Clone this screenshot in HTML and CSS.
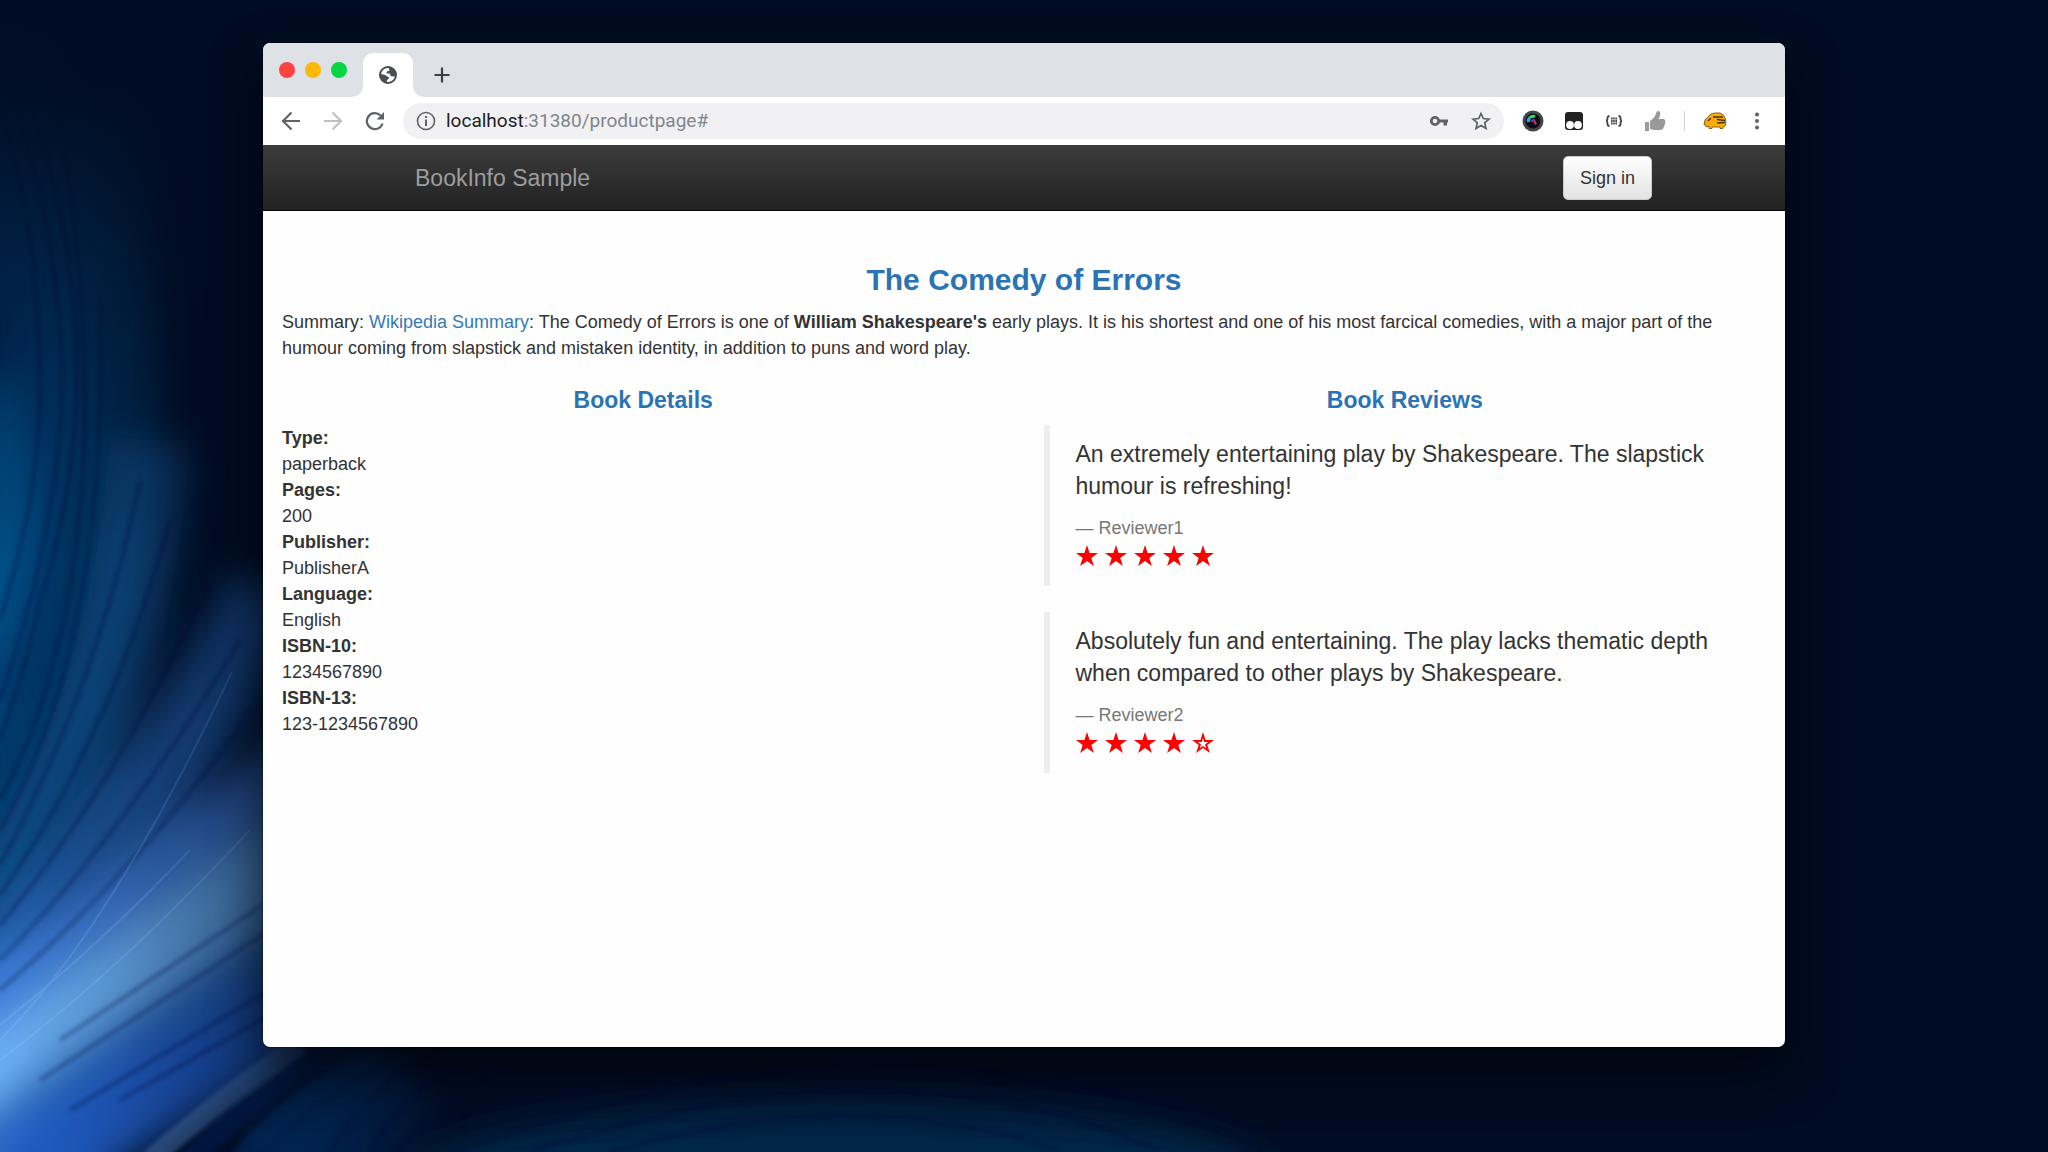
FILE: index.html
```html
<!DOCTYPE html>
<html lang="en">
<head>
<meta charset="utf-8">
<title>Simple Bookstore App</title>
<link rel="stylesheet" href="styles.css">
</head>

<body>
	<!-- desktop wallpaper -->
	<svg class="wallpaper" viewBox="0 0 2048 1152" preserveAspectRatio="none" aria-hidden="true">
		<defs>
			<linearGradient id="fade" gradientUnits="userSpaceOnUse" x1="0" y1="0" x2="480" y2="0">
				<stop offset="0" stop-color="#fff"/>
				<stop offset="0.25" stop-color="#ccc"/>
				<stop offset="0.6" stop-color="#666"/>
				<stop offset="1" stop-color="#000"/>
			</linearGradient>
			<mask id="edge" maskUnits="userSpaceOnUse" x="-60" y="-60" width="700" height="1300">
				<rect x="-60" y="-60" width="700" height="1300" fill="url(#fade)"/>
			</mask>
			<linearGradient id="night" x1="0" y1="0" x2="0" y2="1">
				<stop offset="0" stop-color="#000c22"/>
				<stop offset="0.15" stop-color="#000c22" stop-opacity="0.95"/>
				<stop offset="0.5" stop-color="#000c22" stop-opacity="0.5"/>
				<stop offset="1" stop-color="#000c22" stop-opacity="0"/>
			</linearGradient>
			<linearGradient id="ridge" x1="0" y1="0" x2="0" y2="1">
				<stop offset="0" stop-color="#03203f"/>
				<stop offset="1" stop-color="#04375c"/>
			</linearGradient>
			<filter id="soft" filterUnits="userSpaceOnUse" x="-100" y="-100" width="2200" height="1400">
				<feGaussianBlur stdDeviation="18"/>
			</filter>
			<filter id="fine" filterUnits="userSpaceOnUse" x="-20" y="-20" width="1600" height="1200">
				<feGaussianBlur stdDeviation="2"/>
			</filter>
		</defs>
		<rect width="2048" height="1152" fill="#000c22"/>
		<g mask="url(#edge)">
			<g fill="none" filter="url(#soft)">
				<path d="M-70 0Q100 330 -20 640" stroke="#02498a" stroke-width="90" opacity="0.7"/>
				<path d="M-20 380Q30 520 -30 740" stroke="#05629c" stroke-width="60" opacity="0.6"/>
				<path d="M20 0Q140 440 -40 800" stroke="#03467e" stroke-width="60" opacity="0.6"/>
				<path d="M90 100Q190 600 -40 880" stroke="#075492" stroke-width="80" opacity="0.5"/>
				<path d="M150 440Q130 760 -40 940" stroke="#1262a8" stroke-width="80" opacity="0.6"/>
				<path d="M270 590Q150 840 -40 1000" stroke="#2872cc" stroke-width="80" opacity="0.7"/>
				<path d="M400 690Q200 860 -40 1040" stroke="#4484e4" stroke-width="80" opacity="0.9"/>
				<path d="M420 780Q200 910 -40 1110" stroke="#6cb2f6" stroke-width="80"/>
				<path d="M420 880Q220 980 -40 1170" stroke="#2e70c4" stroke-width="70"/>
				<path d="M440 940Q220 1030 20 1180" stroke="#2260cc" stroke-width="90"/>
				<path d="M420 1080L280 1190" stroke="#0350a0" stroke-width="110"/>
			</g>
			<g fill="none" filter="url(#fine)">
				<path d="M300 1045Q230 1090 150 1160" stroke="#7ab8ff" stroke-width="20" opacity="0.4"/>
				<path d="M330 1045Q260 1095 190 1160" stroke="#00286e" stroke-width="20" opacity="0.6"/>
				<path d="M380 1050Q290 1100 240 1160" stroke="#0a58b8" stroke-width="20" opacity="0.4"/>
			</g>
		</g>
		<ellipse cx="840" cy="1190" rx="440" ry="90" fill="url(#ridge)" filter="url(#soft)"/>
		<g fill="none" stroke="#000c38" stroke-width="3" opacity="0.4" filter="url(#fine)">
			<path d="M0 110Q40 220 40 400Q38 500 0 620"/>
			<path d="M0 60Q65 240 62 400Q55 540 0 700"/>
			<path d="M0 30Q130 320 40 600Q25 670 0 740"/>
			<path d="M60 120Q130 560 0 800"/>
			<path d="M100 300Q110 640 0 830"/>
			<path d="M140 480Q100 680 0 865"/>
			<path d="M170 520Q110 740 0 895"/>
			<path d="M210 580Q120 780 0 925"/>
			<path d="M240 640Q120 840 0 960"/>
			<path d="M260 700Q130 880 0 990"/>
			<path d="M450 1152Q700 1070 860 1062Q1120 1070 1260 1152"/>
			<path d="M530 1152Q720 1090 860 1090Q1050 1095 1160 1152"/>
			<path d="M610 1152Q740 1115 860 1116Q980 1120 1060 1152"/>
			<path d="M270 900L60 1040M270 930L40 1080M270 990L70 1110M270 1015L120 1100"/>
			<path d="M420 1060Q360 1100 330 1152M460 1060Q400 1100 370 1152M510 1060Q440 1100 400 1152"/>
		</g>
		<g fill="none" stroke="#9cc8ff" stroke-width="2" opacity="0.2" mask="url(#edge)">
			<path d="M0 1040Q110 930 232 672"/>
			<path d="M0 1025Q100 945 190 850"/>
			<path d="M0 1060Q120 970 250 830"/>
		</g>
		<rect width="600" height="560" fill="url(#night)"/>
	</svg>

	<main class="desktop">
	<div class="window">
		<!-- tab strip -->
		<div class="tabs">
			<div class="lights"><i class="close"></i><i class="minimize"></i><i class="zoom"></i></div>
			<div class="tab">
				<svg width="20" height="20" viewBox="0 0 20 20"><circle cx="10" cy="10" r="8" fill="#fff" stroke="#4a4d51" stroke-width="2"/><path d="M9 1.500Q14 1 17 5L18.500 9Q18 12 15 11.500L12.500 11L12 8.500H8.500L9 6.500L11.500 5.500L11 3.500ZM1.500 9L6 9.500L9.500 11.500L11.500 13L9 15L8.500 18Q2.500 16 1.500 11Z" fill="#4a4d51"/></svg>
			</div>
			<button class="newtab" aria-label="New tab">
				<svg width="18" height="18" viewBox="0 0 18 18" fill="none" stroke="#3c4043" stroke-width="2.200"><path d="M9 1.500V16.500M1.500 9H16.500"/></svg>
			</button>
		</div>

		<!-- toolbar -->
		<div class="toolbar">
			<button aria-label="Back"><svg width="20" height="20" viewBox="0 0 20 20" fill="none" stroke="#5f6368" stroke-width="2.200"><path d="M19 10H2M10.500 1.500L2 10L10.500 18.500"/></svg></button>
			<button aria-label="Forward"><svg width="20" height="20" viewBox="0 0 20 20" fill="none" stroke="#bdc1c6" stroke-width="2.200"><path d="M1 10H18M9.500 1.500L18 10L9.500 18.500"/></svg></button>
			<button aria-label="Reload"><svg width="20" height="20" viewBox="0 0 20 20"><path d="M17.500 12.500A8 8 0 1 1 15.500 4.500" fill="none" stroke="#5f6368" stroke-width="2.200"/><path d="M19 1V8.500H11.500Z" fill="#5f6368"/></svg></button>
			<div class="address">
				<svg width="20" height="20" viewBox="0 0 20 20"><circle cx="10" cy="10" r="8.500" fill="none" stroke="#5f6368" stroke-width="1.600"/><path d="M9 5H11V7H9ZM9 8.500H11V15H9Z" fill="#5f6368"/></svg>
				<span class="url"><b>localhost</b>:31380/productpage#</span>
				<button aria-label="Passwords"><svg width="20" height="20" viewBox="0 0 20 20"><circle cx="6" cy="10" r="3.700" fill="none" stroke="#5f6368" stroke-width="2.800"/><path d="M9 8.500H19V11.500H18V14.500H14.500V11.500H9Z" fill="#5f6368"/></svg></button>
				<button aria-label="Bookmark"><svg width="20" height="20" viewBox="0 0 20 20"><path d="M10 2.500L12.300 7.500L18 8.100L13.700 11.900L15 17.500L10 14.600L5 17.500L6.300 11.900L2 8.100L7.700 7.500Z" fill="none" stroke="#5f6368" stroke-width="1.700"/></svg></button>
			</div>
			<div class="extensions">
				<button aria-label="Camera extension"><svg width="22" height="22" viewBox="0 0 22 22" fill="none" stroke-width="3"><circle cx="11" cy="11" r="10.500" fill="#42474a"/><circle cx="11" cy="11" r="7.500" fill="#0c0c14"/><path d="M6.500 12A4.500 4.500 0 0 1 8 7.500" stroke="#20b0e8"/><path d="M8 7.500A5 5 0 0 1 13 6.500" stroke="#30e050"/><path d="M9.500 12Q10 10 12.500 10" stroke="#3050e0" stroke-width="2"/><path d="M12 10L14 14.500" stroke="#e02080" stroke-width="2"/></svg></button>
				<button aria-label="Script extension"><svg width="20" height="20" viewBox="0 0 20 20"><rect x="1" y="1" width="18" height="18" rx="3" fill="#222"/><circle cx="6" cy="14" r="3.900" fill="#fff"/><circle cx="14" cy="14" r="3.900" fill="#fff"/></svg></button>
				<button aria-label="JSON extension"><svg width="20" height="20" viewBox="0 0 20 20" fill="none" stroke="#444" stroke-width="1.800"><path d="M5.500 5Q3.500 5 3.500 7Q3.500 10 2 10Q3.500 10 3.500 13Q3.500 15 5.500 15M14.500 5Q16.500 5 16.500 7Q16.500 10 18 10Q16.500 10 16.500 13Q16.500 15 14.500 15"/><path d="M7 7.500H13M7 10H13M7 12.500H13" stroke-dasharray="1.600 0.600"/></svg></button>
				<button aria-label="Like"><svg width="22" height="22" viewBox="0 0 22 22" fill="#9a9a9a"><path d="M1 12H5V21H1ZM6 11Q11 8 12.500 2Q14 0 16 2Q17 5 14.500 9H20Q22 10 21 14L19.500 18Q19 20 16 20H10L6 19Z"/></svg></button>
				<span class="divider"></span>
				<button aria-label="Profile"><svg width="24" height="20" viewBox="0 0 24 20"><path d="M1 14Q1 8 5 6Q7 2 12 2H17Q21 3 22.500 8Q23.500 13 22 15L20 16V17.500H17V16H9V17.500H6V15.500L3 15.500L2.500 13.500Z" fill="#fbab0c" stroke="#8d641a"/><path d="M10 6H20M14 8.500L22 9.500M14 12L22 11.500M5 10L8 7" stroke="#49330d" stroke-width="1.300"/></svg></button>
				<button aria-label="Menu"><svg width="20" height="20" viewBox="0 0 20 20" fill="#5f6368"><circle cx="10" cy="3.500" r="2"/><circle cx="10" cy="10" r="2"/><circle cx="10" cy="16.500" r="2"/></svg></button>
			</div>
		</div>

		<!-- product page -->
		<nav class="navbar">
			<a class="brand" href="#">BookInfo Sample</a>
			<button class="signin">Sign in</button>
		</nav>

		<div class="page">
			<h3>The Comedy of Errors</h3>
			<p>Summary: <a href="#">Wikipedia Summary</a>: The Comedy of Errors is one of <b>William Shakespeare's</b> early plays. It is his shortest and one of his most farcical comedies, with a major part of the humour coming from slapstick and mistaken identity, in addition to puns and word play.</p>

			<div class="row">
				<div class="col">
					<h4>Book Details</h4>
					<dl>
						<dt>Type:</dt><dd>paperback</dd>
						<dt>Pages:</dt><dd>200</dd>
						<dt>Publisher:</dt><dd>PublisherA</dd>
						<dt>Language:</dt><dd>English</dd>
						<dt>ISBN-10:</dt><dd>1234567890</dd>
						<dt>ISBN-13:</dt><dd>123-1234567890</dd>
					</dl>
				</div>
				<div class="col">
					<h4>Book Reviews</h4>
					<blockquote>
						<p>An extremely entertaining play by Shakespeare. The slapstick humour is refreshing!</p>
						<small>Reviewer1</small>
						<div class="stars" role="img" aria-label="5 of 5">
							<svg viewBox="0 0 22 22"><use href="#star"/></svg>
							<svg viewBox="0 0 22 22"><use href="#star"/></svg>
							<svg viewBox="0 0 22 22"><use href="#star"/></svg>
							<svg viewBox="0 0 22 22"><use href="#star"/></svg>
							<svg viewBox="0 0 22 22"><use href="#star"/></svg>
						</div>
					</blockquote>
					<blockquote>
						<p>Absolutely fun and entertaining. The play lacks thematic depth when compared to other plays by Shakespeare.</p>
						<small>Reviewer2</small>
						<div class="stars" role="img" aria-label="4 of 5">
							<svg viewBox="0 0 22 22"><use href="#star"/></svg>
							<svg viewBox="0 0 22 22"><use href="#star"/></svg>
							<svg viewBox="0 0 22 22"><use href="#star"/></svg>
							<svg viewBox="0 0 22 22"><use href="#star"/></svg>
							<svg viewBox="0 0 22 22"><use href="#star-empty"/></svg>
						</div>
					</blockquote>
				</div>
			</div>
		</div>
	</div>
	</main>

	<svg class="symbols" aria-hidden="true">
		<symbol id="star" viewBox="0 0 22 22"><path d="M11 0L13.600 8H22L15.300 13L17.900 21L11 16.100L4.100 21L6.700 13L0 8H8.400Z"/></symbol>
		<symbol id="star-empty" viewBox="0 0 22 22"><path fill-rule="evenodd" d="M11 0L13.600 8H22L15.300 13L17.900 21L11 16.100L4.100 21L6.700 13L0 8H8.400ZM11 6L9.800 10H5.800L9 12.400L7.800 16.200L11 13.900L14.200 16.200L13 12.400L16.200 10H12.200Z"/></symbol>
	</svg>
</body>
</html>
```
FILE: styles.css
```css
* {
	box-sizing: border-box;
}

body {
	margin: 0;
	background: #000c22;
	color: #333;
	font: 18px/26px "Liberation Sans", Arial, sans-serif;
}

a {
	color: #337ab7;
	text-decoration: none;
}

button {
	display: flex;
	padding: 0;
	border: 0;
	background: none;
	font: inherit;
}

svg {
	display: block;
	flex: none;
}

.symbols {
	display: none;
}

.wallpaper {
	position: absolute;
	top: 0;
	left: 0;
	width: 100%;
	height: 100%;
}

.desktop {
	position: relative;
	display: flex;
	min-height: 100vh;
	padding: 43px 263px 105px;
}

.window {
	flex: 1;
	overflow: hidden;
	background: #fefefe;
	border-radius: 7px;
	box-shadow: 0 24px 50px rgba(0, 0, 0, 0.6), 0 0 2px #000;
}

/* browser chrome */
.tabs {
	display: flex;
	height: 54px;
	padding-left: 16px;
	background: #dee1e6;
}

.lights {
	display: flex;
	gap: 10px;
	width: 84px;
	padding-top: 19px;
}

.lights i {
	width: 16px;
	height: 16px;
	border-radius: 50%;
}

.close {
	background: #fc4441;
}

.minimize {
	background: #fdb90b;
}

.zoom {
	background: #06d541;
}

.tab {
	position: relative;
	display: flex;
	align-items: center;
	justify-content: center;
	width: 50px;
	margin-top: 10px;
	background: #fff;
	border-radius: 10px 10px 0 0;
}

.tab::before,
.tab::after {
	content: "";
	position: absolute;
	bottom: 0;
	width: 10px;
	height: 10px;
}

.tab::before {
	right: 100%;
	background: radial-gradient(circle at 0 0, transparent 9px, #fff 10px);
}

.tab::after {
	left: 100%;
	background: radial-gradient(circle at 100% 0, transparent 9px, #fff 10px);
}

.newtab {
	margin: 23px 0 0 20px;
}

.toolbar {
	display: flex;
	align-items: center;
	gap: 22px;
	height: 48px;
	padding: 0 18px;
	background: #fff;
}

.address {
	display: flex;
	flex: 1;
	align-items: center;
	gap: 22px;
	height: 36px;
	margin: 0 -4px;
	padding: 0 13px;
	background: #f1f1f4;
	border-radius: 18px;
}

.url {
	flex: 1;
	margin-left: -12px;
	color: #80868b;
	font-family: Roboto, sans-serif;
	font-size: 19px;
}

.url b {
	color: #202124;
	font-weight: normal;
}

.extensions {
	display: flex;
	align-items: center;
	gap: 20px;
}

.divider {
	width: 1px;
	height: 20px;
	margin: 0 -2px;
	background: #d0d2d5;
}

/* product page */
.navbar {
	display: flex;
	align-items: center;
	justify-content: space-between;
	height: 66px;
	padding: 0 133px 0 152px;
	background: linear-gradient(#3c3c3c, #222);
	border-bottom: 1px solid #080808;
}

.brand {
	color: #9d9d9d;
	font-size: 23px;
}

.signin {
	padding: 8px 16px;
	border: 1px solid #ccc;
	border-radius: 5px;
	background: linear-gradient(#fff, #e2e2e2);
	color: #333;
}

.page {
	padding: 52px 19px 20px;
}

h3,
h4 {
	margin: 0;
	color: #2a74b5;
	font-weight: bold;
	text-align: center;
}

h3 {
	font-size: 30px;
	line-height: 34px;
}

p {
	margin: 12px 0 0;
}

.row {
	display: grid;
	grid-template-columns: 1fr 1fr;
	gap: 39px;
	margin-top: 26px;
}

h4 {
	margin-bottom: 12px;
	font-size: 23px;
}

dl {
	margin: 0;
}

dt {
	font-weight: bold;
}

dd {
	margin: 0;
}

blockquote {
	margin: 0 0 26px;
	padding: 13px 26px;
	border-left: 6px solid #eee;
	font-size: 23px;
	line-height: 32px;
}

blockquote p {
	margin: 0 0 13px;
}

small {
	display: block;
	color: #777;
	font-size: 18px;
	line-height: 26px;
}

small::before {
	content: "\2014\00a0";
}

.stars {
	display: flex;
	align-items: center;
	gap: 7px;
	height: 32px;
	padding-bottom: 2px;
	fill: #f00;
}

.stars svg {
	width: 22px;
	height: 22px;
}
```
